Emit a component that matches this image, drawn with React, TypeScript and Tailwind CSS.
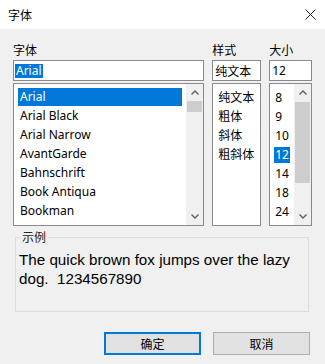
import React from "react";

const ui = { fontFamily: '"Noto Sans", "Noto Sans CJK SC", sans-serif' };
const cjk = { fontFamily: '"Noto Sans CJK SC", "Noto Sans", sans-serif' };

function Chevron({ up }: { up?: boolean }) {
  return (
    <svg width="8" height="5" viewBox="0 0 8 5">
      <polyline
        points={up ? "0.5,4.5 4,1 7.5,4.5" : "0.5,0.5 4,4 7.5,0.5"}
        fill="none"
        stroke="#606060"
        strokeWidth="1.4"
      />
    </svg>
  );
}

function ScrollBar({ thumbTop, thumbH }: { thumbTop: number; thumbH: number }) {
  return (
    <div className="w-[17px] h-full bg-[#f0f0f0] flex flex-col shrink-0">
      <div className="h-[17px] flex items-center justify-center shrink-0">
        <Chevron up />
      </div>
      <div className="flex-1 flex flex-col">
        <div style={{ height: thumbTop }} className="shrink-0" />
        <div style={{ height: thumbH }} className="bg-[#cdcdcd] mx-[1px] shrink-0" />
      </div>
      <div className="h-[17px] flex items-center justify-center shrink-0">
        <Chevron />
      </div>
    </div>
  );
}

const fonts = ["Arial", "Arial Black", "Arial Narrow", "AvantGarde", "Bahnschrift", "Book Antiqua", "Bookman"];
const styles = ["纯文本", "粗体", "斜体", "粗斜体"];
const sizes = ["8", "9", "10", "12", "14", "18", "24"];

export default function App() {
  return (
    <div className="w-[325px] h-[364px] bg-[#f0f0f0] flex flex-col text-[12px] text-black overflow-hidden" style={ui}>
      <div className="h-[29px] bg-white flex items-center justify-between pl-[8px] pr-[9px] shrink-0">
        <span style={cjk} className="leading-[16px]">字体</span>
        <svg width="11" height="11" viewBox="0 0 11 11">
          <path d="M0.5 0.5 L10.5 10.5 M10.5 0.5 L0.5 10.5" stroke="#222" strokeWidth="1" />
        </svg>
      </div>
      <div className="flex flex-col px-[13px] pt-[13px]">
        <div className="flex gap-[8px]">
          {/* Font column */}
          <div className="w-[192px] flex flex-col">
            <div style={cjk} className="h-[16px] leading-[16px] mb-[2px]">字体</div>
            <div className="h-[21px] bg-white border border-[#8a8a8a] flex items-center pl-[1px]">
              <span className="bg-[#0078d7] text-white leading-[14px] px-[1px]">Arial</span>
            </div>
            <div className="mt-[2px] h-[143px] bg-white border border-[#8a8a8a] flex">
              <div className="flex-1 flex flex-col pt-[4px] px-[4px]">
                {fonts.map((f, i) => (
                  <div key={f} className="h-[19px] shrink-0 flex">
                    <div
                      className={
                        "w-full h-[18px] leading-[18px] pl-[2px] " +
                        (i === 0 ? "bg-[#0078d7] text-white" : "")
                      }
                    >
                      {f}
                    </div>
                  </div>
                ))}
              </div>
              <ScrollBar thumbTop={0} thumbH={11} />
            </div>
          </div>
          {/* Style column */}
          <div className="w-[49px] flex flex-col">
            <div style={cjk} className="h-[16px] leading-[16px] mb-[2px]">样式</div>
            <div style={cjk} className="h-[21px] bg-white border border-[#8a8a8a] flex items-center pl-[2px] leading-[14px]">
              纯文本
            </div>
            <div className="mt-[2px] h-[143px] bg-white border border-[#8a8a8a] flex flex-col pt-[4px] pl-[5px]" style={cjk}>
              {styles.map((s) => (
                <div key={s} className="h-[19px] leading-[18px] shrink-0">
                  {s}
                </div>
              ))}
            </div>
          </div>
          {/* Size column */}
          <div className="w-[43px] flex flex-col">
            <div style={cjk} className="h-[16px] leading-[16px] mb-[2px]">大小</div>
            <div className="h-[21px] bg-white border border-[#8a8a8a] flex items-center pl-[2px] leading-[14px]">
              12
            </div>
            <div className="mt-[2px] h-[143px] bg-white border border-[#8a8a8a] flex">
              <div className="flex-1 flex flex-col pt-[4px] px-[4px]">
                {sizes.map((s) => (
                  <div key={s} className="h-[19px] shrink-0 flex items-center">
                    <div
                      className={
                        "w-full h-[16px] leading-[16px] pl-[1px] " +
                        (s === "12" ? "bg-[#0078d7] text-white" : "")
                      }
                    >
                      {s}
                    </div>
                  </div>
                ))}
              </div>
              <ScrollBar thumbTop={1} thumbH={81} />
            </div>
          </div>
        </div>
        {/* Sample */}
        <fieldset className="mt-[4px] ml-[2px] w-[294px] h-[82px] border border-[#dcdcdc] pl-[4px] pr-[4px] pb-0 pt-0 m-0 box-border">
          <legend style={cjk} className="px-[2px] leading-[14px] text-[12px] text-[#222]">
            示例
          </legend>
          <div
            className="mt-[6px] ml-[-1px] text-[15.2px] leading-[19px] whitespace-pre"
            style={{ fontFamily: '"Liberation Sans", Arial, sans-serif' }}
          >
            The quick brown fox jumps over the lazy
            <br />
            dog.  1234567890
          </div>
        </fieldset>
        {/* Buttons */}
        <div className="flex justify-end gap-[12px] mt-[20px] mr-[2px]">
          <button
            style={cjk}
            className="w-[97px] h-[23px] bg-[#e1e1e1] border-2 border-[#0078d7] text-[12px] leading-[16px] flex items-center justify-center"
          >
            确定
          </button>
          <button
            style={cjk}
            className="w-[97px] h-[23px] bg-[#e1e1e1] border border-[#adadad] text-[12px] leading-[16px] flex items-center justify-center"
          >
            取消
          </button>
        </div>
      </div>
    </div>
  );
}
